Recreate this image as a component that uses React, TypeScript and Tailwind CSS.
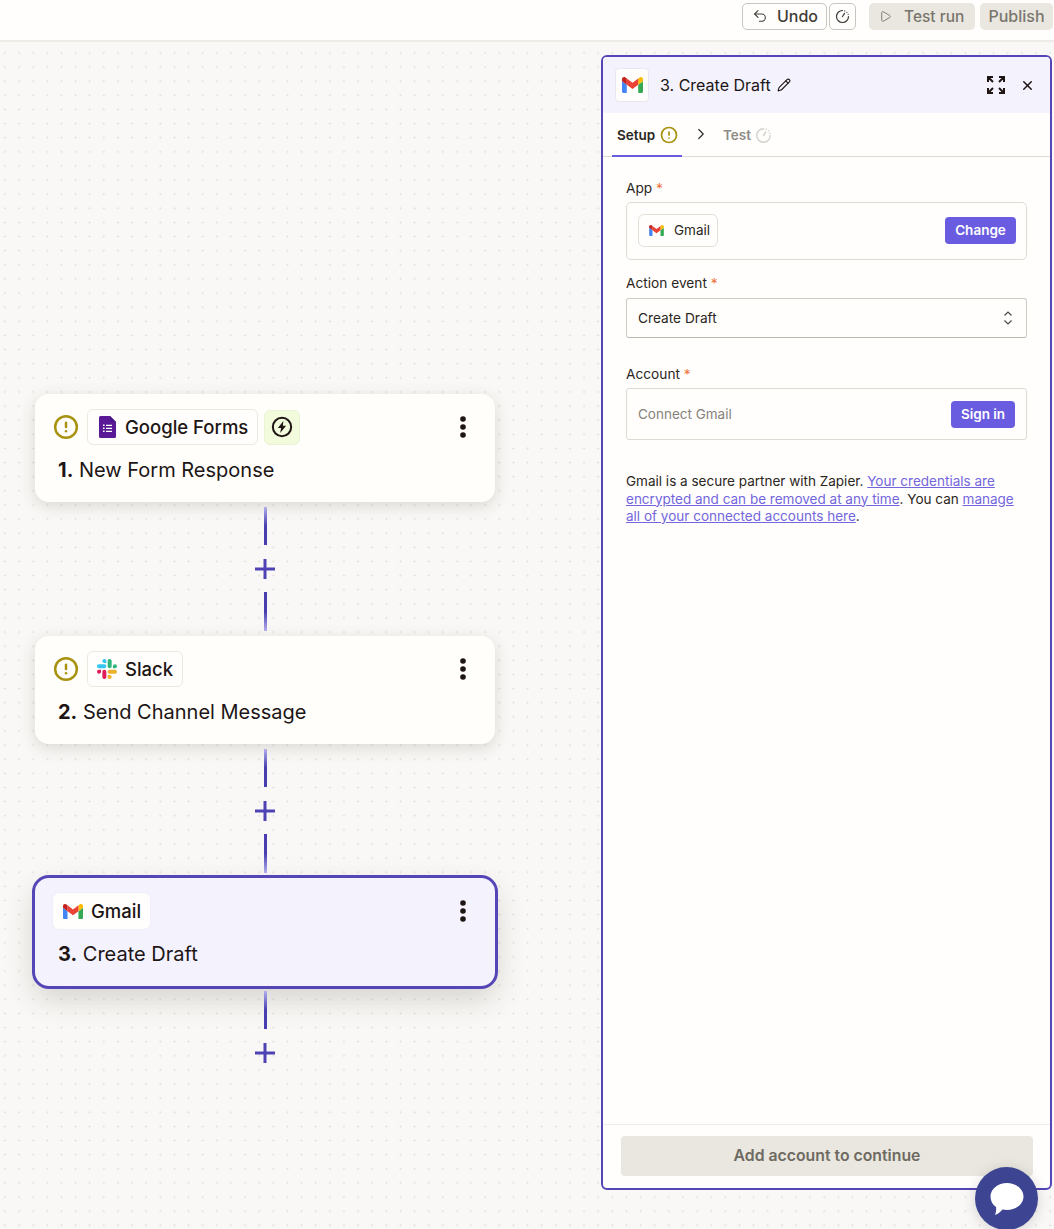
import { CircleAlert, Pencil, Play, Undo2, X, ChevronRight } from 'lucide-react'

function GmailIcon({ className }: { className: string }) {
  return (
    <svg viewBox="52 42 88 66" className={className}>
      <path fill="#4285f4" d="M58 108h14V74L52 59v43c0 3.32 2.69 6 6 6" />
      <path fill="#34a853" d="M120 108h14c3.32 0 6-2.69 6-6V59l-20 15" />
      <path fill="#fbbc04" d="M120 48v26l20-15v-8c0-7.42-8.47-11.65-14.4-7.2" />
      <path fill="#ea4335" d="M72 74V48l24 18 24-18v26L96 92" />
      <path fill="#c5221f" d="M52 51v8l20 15V48l-5.6-4.2c-5.94-4.45-14.4-.22-14.4 7.2" />
    </svg>
  )
}

function SlackIcon() {
  return (
    <svg viewBox="0 0 2447.6 2452.5" className="w-[20px] h-[20px]">
      <path fill="#36c5f0" d="m897.4 0c-135.3.1-244.8 109.9-244.7 245.2-.1 135.3 109.5 245.1 244.8 245.2h244.8v-245.1c.1-135.3-109.5-245.1-244.9-245.3.1 0 .1 0 0 0m0 654h-652.6c-135.3.1-244.9 109.9-244.8 245.2-.2 135.3 109.4 245.1 244.7 245.3h652.7c135.3-.1 244.9-109.9 244.8-245.2.1-135.4-109.5-245.2-244.8-245.3z" />
      <path fill="#2eb67d" d="m2447.6 899.2c.1-135.3-109.5-245.1-244.8-245.2-135.3.1-244.9 109.9-244.8 245.2v245.3h244.8c135.3-.1 244.9-109.9 244.8-245.3zm-652.7 0v-654c.1-135.2-109.4-245-244.7-245.2-135.3.1-244.9 109.9-244.8 245.2v654c-.2 135.3 109.4 245.1 244.7 245.3 135.3-.1 244.9-109.9 244.8-245.3z" />
      <path fill="#ecb22e" d="m1550.1 2452.5c135.3-.1 244.9-109.9 244.8-245.2.1-135.3-109.5-245.1-244.8-245.2h-244.8v245.2c-.1 135.2 109.5 245 244.8 245.2zm0-654.1h652.7c135.3-.1 244.9-109.9 244.8-245.2.2-135.3-109.4-245.1-244.7-245.3h-652.7c-135.3.1-244.9 109.9-244.8 245.2-.1 135.4 109.4 245.2 244.7 245.3z" />
      <path fill="#e01e5a" d="m0 1553.2c-.1 135.3 109.5 245.1 244.8 245.2 135.3-.1 244.9-109.9 244.8-245.2v-245.2h-244.8c-135.3.1-244.9 109.9-244.8 245.2zm652.7 0v654c-.2 135.3 109.4 245.1 244.7 245.3 135.3-.1 244.9-109.9 244.8-245.2v-653.9c.2-135.3-109.4-245.1-244.7-245.3-135.4 0-244.9 109.8-244.8 245.1 0 0 0 .1 0 0z" />
    </svg>
  )
}

function FormsIcon() {
  return (
    <svg viewBox="0 0 17 22" className="w-[17px] h-[22px]">
      <path fill="#5a1a96" d="M1.5 0H11l6 6v14.5a1.5 1.5 0 0 1-1.5 1.5h-14A1.5 1.5 0 0 1 0 20.5v-19A1.5 1.5 0 0 1 1.5 0z" />
      <path fill="#4a148c" d="M11 0l6 6h-4.5A1.5 1.5 0 0 1 11 4.5z" />
      <path fill="#fff" d="M4 8.5h1.6v1.6H4zM7 8.7h6v1.2H7zM4 11.5h1.6v1.6H4zM7 11.7h6v1.2H7zM4 14.5h1.6v1.6H4zM7 14.7h6v1.2H7z" />
    </svg>
  )
}

function TimerIcon({ className }: { className: string }) {
  return (
    <svg viewBox="0 0 16 16" fill="none" stroke="currentColor" strokeWidth="1.3" strokeLinecap="round" className={className}>
      <path d="M8 1.6A6.4 6.4 0 1 0 14.4 8" />
      <path d="M8 8l2.2-3.4" />
      <path d="M10.4 2.1l.01.01M12.7 3.6l.01.01M14 5.7l.01.01" />
    </svg>
  )
}

function ExpandIcon() {
  return (
    <svg viewBox="0 0 20 20" fill="none" stroke="#201515" strokeWidth="2" className="w-[20px] h-[20px]">
      <path d="M2 7V2h5M2 2l5 5M13 2h5v5M18 2l-5 5M2 13v5h5M2 18l5-5M13 18h5v-5M18 18l-5-5" />
    </svg>
  )
}

function MoreDots() {
  return (
    <svg viewBox="0 0 8 24" className="w-[8px] h-[24px]" fill="#201515">
      <circle cx="4" cy="4" r="2.8" />
      <circle cx="4" cy="12" r="2.8" />
      <circle cx="4" cy="20" r="2.8" />
    </svg>
  )
}

function Warn({ className }: { className: string }) {
  return <CircleAlert className={className} strokeWidth={2.3} color="#a8920f" />
}

function AppChip({ icon, name, selected }: { icon: React.ReactNode; name: string; selected?: boolean }) {
  return (
    <div
      className={`h-[36px] flex items-center gap-[8px] rounded-[6px] bg-[#fffefc] ${
        selected ? 'pl-[10px] pr-[9px] shadow-[0_0_0_1px_#f0eef8]' : 'pl-[9px] pr-[9px] border border-[#ece9df]'
      }`}
    >
      <span className="w-[20px] flex justify-center">{icon}</span>
      <span className="text-[18.5px] font-medium text-[#201515] leading-none">{name}</span>
    </div>
  )
}

function StepCard({
  num,
  title,
  selected,
  children,
}: {
  num: number
  title: string
  selected?: boolean
  children: React.ReactNode
}) {
  return (
    <div
      className={`w-[460px] h-[108px] rounded-[14px] pl-[18px] pr-[28px] pt-[15px] ${
        selected
          ? 'bg-[#f4f3fd] outline-[3px] outline-[#5546b8] shadow-[0_12px_30px_rgba(60,55,40,0.2)]'
          : 'bg-[#fffefb] shadow-[0_4px_16px_rgba(60,55,40,0.16)]'
      }`}
    >
      <div className="flex items-center justify-between h-[36px]">
        <div className="flex items-center gap-[6px]">{children}</div>
        <MoreDots />
      </div>
      <p className="mt-[10.5px] pl-[5px] text-[20px] text-[#201515] leading-[28px]">
        <span className="font-bold">{num}.</span> {title}
      </p>
    </div>
  )
}

function Connector({ last }: { last?: boolean }) {
  return (
    <div className={`w-[460px] flex flex-col items-center ${last ? 'h-[100px]' : 'h-[134px]'} pt-[5px]`}>
      <div className="w-[3px] h-[38px] bg-gradient-to-b from-[#b6aeec] to-[#4a3db0] to-50%" />
      <svg viewBox="0 0 20 20" className="w-[20px] h-[20px] mt-[14px] mb-[13px] shrink-0" fill="#4f42b5">
        <path d="M8.500 0h3v8.500H20v3h-8.500V20h-3v-8.500H0v-3h8.500z" />
      </svg>
      {!last && <div className="w-[3px] h-[39px] bg-gradient-to-t from-[#b6aeec] to-[#4a3db0] to-50%" />}
    </div>
  )
}

function Req({ label }: { label: string }) {
  return (
    <p className="text-[13.7px] leading-[20px] text-[#2b2622]">
      {label} <span className="text-[#f0703a]">*</span>
    </p>
  )
}

function Panel() {
  return (
    <aside className="w-[451px] h-[1135px] flex flex-col rounded-[6px] border-2 border-[#5546b8] bg-[#fffefc] overflow-hidden">
      <div className="h-[56px] shrink-0 bg-[#f4f3fd] flex items-center pl-[12px] pr-[15px]">
        <div className="w-[34px] h-[34px] rounded-[4px] border border-[#e8e6ee] bg-[#fffefc] flex items-center justify-center">
          <GmailIcon className="w-[21px] h-[16px]" />
        </div>
        <span className="ml-[11px] text-[16px] text-[#201515]">3. Create Draft</span>
        <Pencil className="ml-[6px] w-[14px] h-[14px] text-[#201515]" strokeWidth={1.9} />
        <div className="ml-auto flex items-center gap-[14px]">
          <ExpandIcon />
          <X className="w-[15px] h-[15px] text-[#201515]" strokeWidth={2.4} />
        </div>
      </div>

      <div className="h-[44px] shrink-0 flex items-stretch border-b border-[#dedbd3] pl-[9px]">
        <div className="w-[70px] flex items-center gap-[5px] pl-[5px] pt-[2px] border-b-2 border-[#6a5ce0] -mb-px">
          <span className="text-[13.5px] font-semibold text-[#2b2622]">Setup</span>
          <Warn className="w-[18px] h-[18px]" />
        </div>
        <ChevronRight className="ml-[10px] mt-[12px] w-[18px] h-[18px] text-[#33302c]" strokeWidth={1.6} />
        <div className="ml-[13px] pt-[2px] flex items-center gap-[4px]">
          <span className="text-[13.5px] font-semibold text-[#8e8b85]">Test</span>
          <TimerIcon className="w-[17px] h-[17px] text-[#d3d0ca]" />
        </div>
      </div>

      <div className="flex-1 px-[23px] pt-[21px]">
        <Req label="App" />
        <div className="mt-[4px] h-[58px] pb-[2px] rounded-[5px] border border-[#dedbd3] flex items-center justify-between pl-[11px] pr-[10px]">
          <div className="h-[33px] w-[80px] rounded-[6px] border border-[#e3e0d8] flex items-center gap-[10px] pl-[10px]">
            <GmailIcon className="w-[15px] h-[11px]" />
            <span className="text-[13.5px] text-[#2b2622]">Gmail</span>
          </div>
          <button className="w-[71px] h-[27px] rounded-[4px] bg-[#6a5ce0] text-[13.5px] font-semibold text-white">Change</button>
        </div>

        <div className="mt-[13px]">
          <Req label="Action event" />
        </div>
        <div className="mt-[5px] h-[40px] rounded-[3px] border border-[#cfccc4] border-b-[#bdbab2] flex items-center justify-between pl-[11px] pr-[12px]">
          <span className="text-[13.7px] text-[#2b2622]">Create Draft</span>
          <svg viewBox="0 0 12 18" fill="none" stroke="#4c4843" strokeWidth="1.2" className="w-[12px] h-[18px]">
            <path d="M2.500 6.500L6 3l3.500 3.500M2.500 11.500L6 15l3.500-3.500" />
          </svg>
        </div>

        <div className="mt-[26px]">
          <Req label="Account" />
        </div>
        <div className="mt-[4px] h-[52px] rounded-[3px] border border-[#dedbd3] flex items-center justify-between pl-[11px] pr-[11px]">
          <span className="text-[13.5px] text-[#85827c]">Connect Gmail</span>
          <button className="w-[64px] h-[27px] rounded-[4px] bg-[#6a5ce0] text-[13.5px] font-semibold text-white">Sign in</button>
        </div>

        <p className="mt-[33px] text-[13.52px] leading-[17.5px] text-[#2b2622]">
          Gmail is a secure partner with Zapier.{' '}
          <a className="text-[#7366dc] underline">Your credentials are encrypted and can be removed at any time</a>. You can{' '}
          <a className="text-[#7366dc] underline">manage all of your connected accounts here</a>.
        </p>
      </div>

      <div className="h-[64px] shrink-0 border-t border-[#eeece6] px-[18px] pt-[11px]">
        <button className="w-[412px] h-[40px] pb-[1px] rounded-[4px] bg-[#e9e7df] text-[15.8px] font-semibold text-[#6e6a62]">
          Add account to continue
        </button>
      </div>
    </aside>
  )
}

export default function App() {
  return (
    <div className="relative h-[1229px] w-[1054px] overflow-hidden bg-[#f9f8f6] font-['Inter',sans-serif] bg-[radial-gradient(circle,#e3e1db_0.8px,transparent_1.2px)] bg-[size:14.14px_14.14px] bg-[position:12px_3.5px]">
      <header className="h-[42px] bg-[#fffefc] border-b-2 border-[#eeece7] flex items-start justify-end pt-[3px] pr-[1px]">
        <button className="w-[85px] h-[27px] pb-[1px] rounded-[5px] border border-[#c9c6bf] bg-[#fffefc] flex items-center pl-[9px] gap-[9px] text-[#403c37]">
          <Undo2 className="w-[16px] h-[16px]" strokeWidth={1.6} />
          <span className="text-[16px] font-medium">Undo</span>
        </button>
        <button className="ml-[2px] w-[27px] h-[27px] rounded-[5px] border border-[#c9c6bf] bg-[#fffefc] flex items-center justify-center text-[#403c37]">
          <TimerIcon className="w-[15px] h-[15px]" />
        </button>
        <button className="ml-[13px] w-[106px] h-[27px] rounded-[5px] bg-[#e9e7df] flex items-center pl-[10px] gap-[12px] text-[#7a766e]">
          <Play className="w-[13px] h-[13px]" strokeWidth={1.7} />
          <span className="text-[15.5px] font-medium">Test run</span>
        </button>
        <button className="ml-[5px] w-[73px] h-[27px] pb-[1px] rounded-[5px] bg-[#e9e7df] text-[16px] font-medium text-[#7a766e]">Publish</button>
      </header>

      <div className="flex items-start">
        <main className="ml-[35px] pt-[352px] w-[460px]">
          <StepCard num={1} title="New Form Response">
            <Warn className="w-[26px] h-[26px] mr-[2px]" />
            <AppChip icon={<FormsIcon />} name="Google Forms" />
            <div className="w-[36px] h-[35px] rounded-[6px] bg-[#f2fbdc] border border-[#eaf3d4] flex items-center justify-center">
              <svg viewBox="0 0 24 24" className="w-[22px] h-[22px]" fill="none" stroke="#201515" strokeWidth="2.2">
                <circle cx="12" cy="12" r="10" />
                <path fill="#201515" stroke="none" d="M13.500 5.500L7.500 13h3.500l-1 5.500 6.500-8h-3.600z" />
              </svg>
            </div>
          </StepCard>
          <Connector />
          <StepCard num={2} title="Send Channel Message">
            <Warn className="w-[26px] h-[26px] mr-[2px]" />
            <AppChip icon={<SlackIcon />} name="Slack" />
          </StepCard>
          <Connector />
          <StepCard num={3} title="Create Draft" selected>
            <AppChip icon={<GmailIcon className="w-[20px] h-[15px]" />} name="Gmail" selected />
          </StepCard>
          <Connector last />
        </main>
        <div className="ml-[106px] mt-[13px]">
          <Panel />
        </div>
      </div>

      <button className="absolute left-[975px] top-[1167px] w-[63px] h-[63px] rounded-full bg-[#3d4592] shadow-[0_2px_14px_rgba(0,0,0,0.15)] flex items-center justify-center">
        <svg viewBox="0 0 34 32" className="w-[34px] h-[32px]" fill="#fff">
          <path d="M17 0C26 0 33.500 6 33.500 13.500S26 27 17 27c-1.500 0-3-.2-4.500-.500C10 29.500 7 31.500 5 32c1-2.500 1.500-5 1-8C2.500 21.500.5 17.800.5 13.500.5 6 8 0 17 0z" />
        </svg>
      </button>
    </div>
  )
}
